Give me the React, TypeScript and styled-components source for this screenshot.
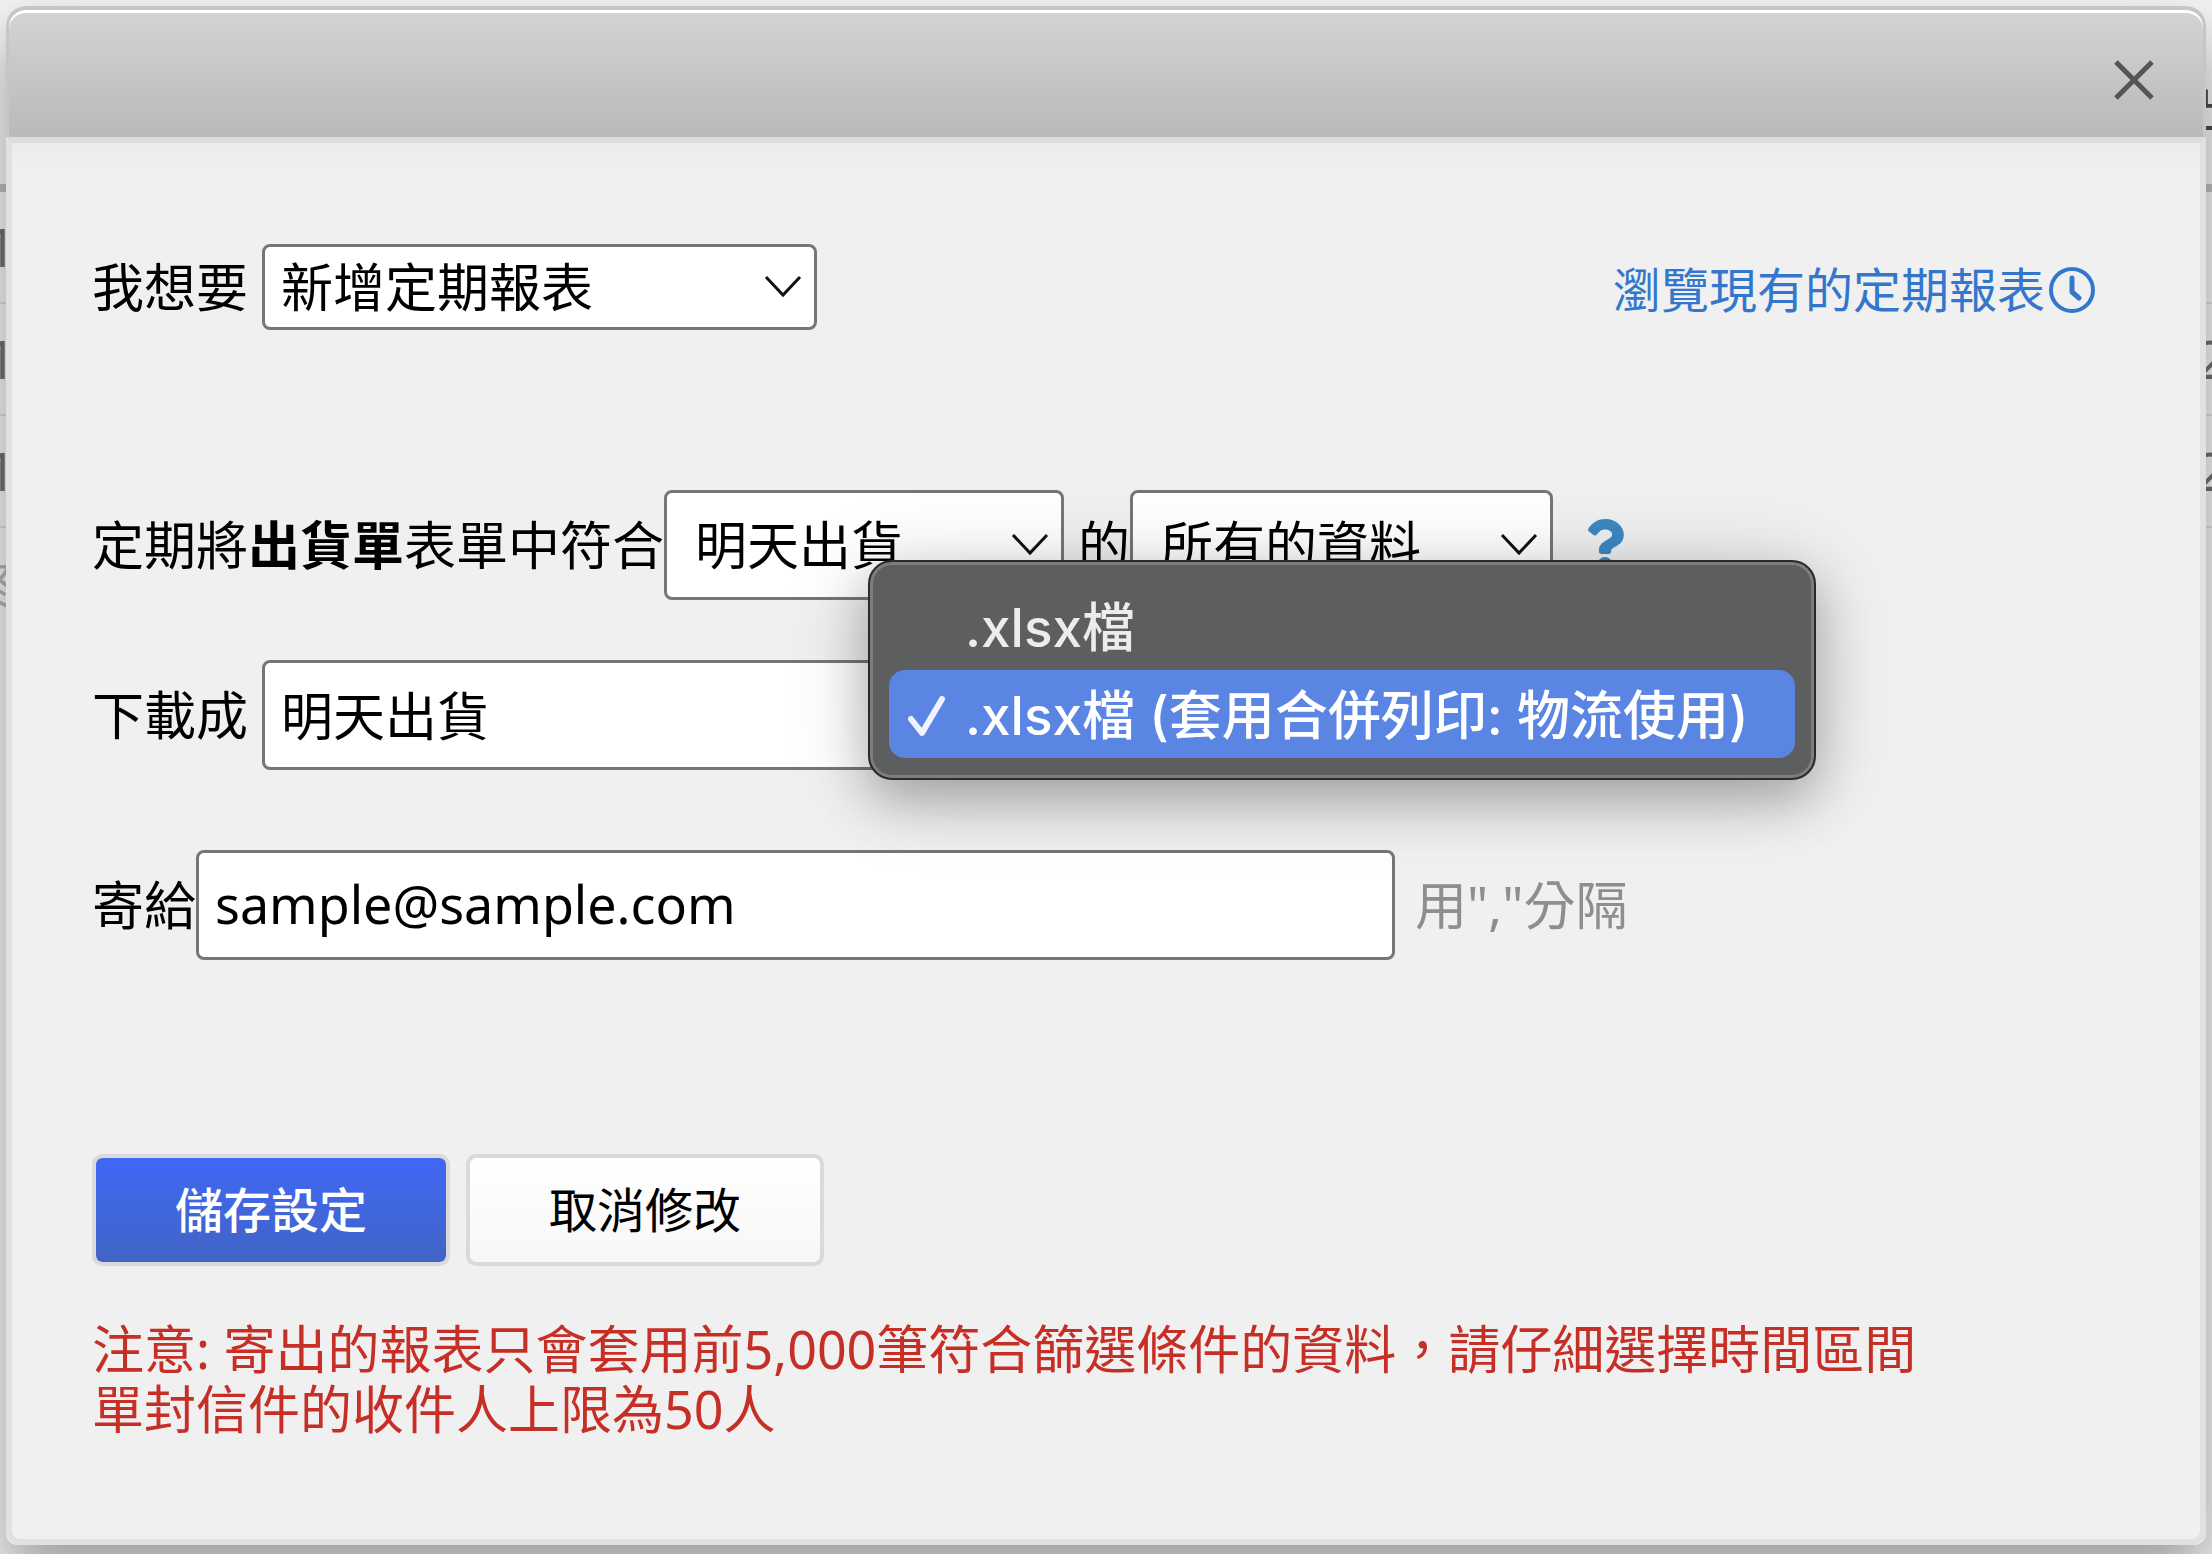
import React, { useState } from "react";
import styled, { createGlobalStyle, css } from "styled-components";
import { FaQuestion } from "react-icons/fa";

const GlobalStyle = createGlobalStyle`
  *, *::before, *::after { box-sizing: border-box; }
  body {
    margin: 0;
    background: #f3f3f3;
    color: #000;
    font-family: "Noto Sans", "Noto Sans CJK TC", sans-serif;
    font-size: 52px;
    line-height: 60px;
  }
  input, select, button { font: inherit; color: inherit; margin: 0; }
`;

const Page = styled.div`
  position: relative;
  min-height: 100vh;
  padding: 6px 6px 8px;
  overflow: hidden;
`;

/* The report list that stays visible round the edges of the dialog. */
const Backdrop = styled.div`
  position: absolute;
  inset: 0;
  overflow: hidden;
  color: #6f6f6f;
`;

const BackRow = styled.div<{ $head?: boolean; $last?: boolean }>`
  display: flex;
  justify-content: space-between;
  align-items: center;
  height: 112px;
  border-bottom: 2px solid #dcdcdc;
  ${(p) =>
    p.$head &&
    css`
      height: 192px;
      border-bottom: 8px solid #bdbdbd;
      padding-top: 34px;
      color: #4a4a4a;
    `}
  ${(p) => p.$last && "border-bottom: 0; color: #b4b4b4;"}
`;

const Edge = styled.span<{ $end?: boolean }>`
  display: flex;
  justify-content: ${(p) => (p.$end ? "flex-end" : "flex-start")};
  width: 16px;
  white-space: nowrap;
`;

const Dialog = styled.section`
  position: relative;
  border-radius: 20px 20px 12px 12px;
  box-shadow: 0 30px 60px rgba(0, 0, 0, 0.36);
`;

const Header = styled.header`
  display: flex;
  align-items: center;
  justify-content: flex-end;
  height: 131px;
  padding: 12px 42px 0;
  border: solid #c6c6c6;
  border-width: 4px 3px 0;
  border-radius: 20px 20px 0 0;
  background: linear-gradient(#d4d4d4, #b9b9b9);
  box-shadow: inset 0 3px 0 #fff;
`;

const CloseButton = styled.button`
  display: flex;
  padding: 6px;
  border: 0;
  background: none;
  color: #555;
`;

const Body = styled.form`
  padding: 101px 104px 100px 80px;
  border: 6px solid #e1e1e1;
  border-top-color: #dcdcdc;
  border-radius: 0 0 14px 14px;
  background: linear-gradient(#ebebeb, #f0f0f0 28px);
`;

const Row = styled.div<{ $space?: number }>`
  display: flex;
  align-items: center;
  white-space: nowrap;
  margin-bottom: ${(p) => p.$space ?? 0}px;
`;

const Label = styled.label<{ $gap?: boolean }>`
  margin-right: ${(p) => (p.$gap ? 14 : 0)}px;
`;

const boxStyle = css`
  border: 3px solid #767676;
  border-radius: 8px;
  background-color: #fff;
`;

const SelectBox = styled.span<{ $width: number }>`
  display: grid;
  align-items: center;
  width: ${(p) => p.$width}px;

  > * { grid-area: 1 / 1; }
  > svg { justify-self: end; margin-right: 15px; pointer-events: none; }
`;

const Select = styled.select<{ $tall?: boolean }>`
  ${boxStyle}
  appearance: none;
  width: 100%;
  height: ${(p) => (p.$tall ? 110 : 86)}px;
  padding: 0 ${(p) => (p.$tall ? 28 : 16)}px;
`;

const TextInput = styled.input<{ $width: number }>`
  ${boxStyle}
  width: ${(p) => p.$width}px;
  height: 110px;
  padding: 0 16px 4px;
`;

const HistoryLink = styled.a`
  display: flex;
  align-items: center;
  gap: 3px;
  margin: 6px 0 0 auto;
  color: #3377cc;
  font-size: 48px;
  text-decoration: none;
`;

const Word = styled.span`
  margin-left: 14px;
`;

const HelpButton = styled.button`
  display: flex;
  margin-left: 26px;
  padding: 0;
  border: 0;
  background: none;
  color: #3b88c4;
`;

const Hint = styled.span`
  margin-left: 20px;
  color: #8e8e8e;
`;

const FormatField = styled.div`
  position: relative;
  margin-left: 10px;
`;

const Menu = styled.ul`
  position: absolute;
  z-index: 2;
  top: -100px;
  left: -44px;
  margin: 0;
  padding: 20px 19px;
  border: 2px solid #2b2b2b;
  border-radius: 24px;
  background: #5d5e5f;
  box-shadow: inset 0 0 0 3px #7c7d7e, 0 20px 50px rgba(0, 0, 0, 0.25), 0 10px 90px rgba(0, 0, 0, 0.15);
  list-style: none;
  font-family: Inter, "Noto Sans CJK TC", sans-serif;
  font-size: 53px;
  font-weight: 500;
`;

const MenuItem = styled.li<{ $on: boolean }>`
  display: flex;
  align-items: center;
  height: 88px;
  padding: 4px 47px 0 18px;
  border-radius: 16px;
  background: ${(p) => (p.$on ? "#5a85e3" : "transparent")};
  color: ${(p) => (p.$on ? "#fff" : "#ececec")};
`;

const Mark = styled.span`
  display: flex;
  width: 58px;
`;

const Button = styled.button<{ $primary?: boolean }>`
  width: 358px;
  height: 112px;
  margin-right: 16px;
  border: 4px solid #dadada;
  border-radius: 10px;
  background: ${(p) =>
    p.$primary ? "linear-gradient(#4067f6, #4065c4)" : "linear-gradient(#ffffff, #f7f7f7)"};
  background-clip: padding-box;
  color: ${(p) => (p.$primary ? "#fff" : "#000")};
  font-size: 48px;
  font-weight: ${(p) => (p.$primary ? 500 : 400)};
`;

const Notice = styled.p`
  margin: 53px 0 0;
  color: #c62f25;
`;

const Chevron = () => (
  <svg width="38" height="24" viewBox="0 0 38 24" fill="none" stroke="#111" strokeWidth="3" aria-hidden="true">
    <path d="M2 2 19 20 36 2" />
  </svg>
);

const Clock = () => (
  <svg width="48" height="48" viewBox="0 0 48 48" fill="none" stroke="currentColor" aria-hidden="true">
    <circle cx="24" cy="24" r="21" strokeWidth="4" />
    <path d="M24 12V26L31 32" strokeWidth="5" strokeLinecap="round" strokeLinejoin="round" />
  </svg>
);

const FORMATS = [".xlsx檔", ".xlsx檔 (套用合併列印: 物流使用)"];

export default function App() {
  const [format, setFormat] = useState(1);

  return (
    <Page>
      <GlobalStyle />
      <Backdrop aria-hidden="true">
        <BackRow $head>
          <Edge />
          <Edge>出</Edge>
        </BackRow>
        <BackRow>
          <Edge $end>1</Edge>
          <Edge />
        </BackRow>
        <BackRow>
          <Edge $end>1</Edge>
          <Edge>2</Edge>
        </BackRow>
        <BackRow>
          <Edge $end>1</Edge>
          <Edge>2</Edge>
        </BackRow>
        <BackRow $last>
          <Edge $end>終</Edge>
          <Edge />
        </BackRow>
      </Backdrop>

      <Dialog role="dialog" aria-label="定期報表">
        <Header>
          <CloseButton type="button" aria-label="關閉">
            <svg width="42" height="42" viewBox="0 0 42 42" fill="none" stroke="currentColor" strokeWidth="5">
              <path d="M3 3 39 39M39 3 3 39" />
            </svg>
          </CloseButton>
        </Header>

        <Body onSubmit={(e) => e.preventDefault()}>
          <Row $space={160}>
            <Label htmlFor="action" $gap>我想要</Label>
            <SelectBox $width={555}>
              <Select id="action">
                <option>新增定期報表</option>
              </Select>
              <Chevron />
            </SelectBox>
            <HistoryLink href="#reports">
              瀏覽現有的定期報表
              <Clock />
            </HistoryLink>
          </Row>

          <Row $space={60}>
            <Label htmlFor="filter">
              定期將<b>出貨單</b>表單中符合
            </Label>
            <SelectBox $width={400}>
              <Select id="filter" $tall>
                <option>明天出貨</option>
              </Select>
              <Chevron />
            </SelectBox>
            <Word>的</Word>
            <SelectBox $width={423}>
              <Select $tall aria-label="資料範圍">
                <option>所有的資料</option>
              </Select>
              <Chevron />
            </SelectBox>
            <HelpButton type="button" aria-label="說明">
              <FaQuestion size={52} />
            </HelpButton>
          </Row>

          <Row $space={80}>
            <Label htmlFor="file" $gap>下載成</Label>
            <TextInput id="file" $width={640} defaultValue="明天出貨" />
            <FormatField>
              <SelectBox $width={800}>
                <Select
                  $tall
                  aria-label="檔案格式"
                  value={format}
                  onChange={(e) => setFormat(Number(e.target.value))}
                >
                  {FORMATS.map((name, i) => (
                    <option key={name} value={i}>{name}</option>
                  ))}
                </Select>
              </SelectBox>
              <Menu role="listbox" aria-label="檔案格式">
                {FORMATS.map((name, i) => (
                  <MenuItem key={name} role="option" aria-selected={i === format} $on={i === format} onClick={() => setFormat(i)}>
                    <Mark>
                      {i === format && (
                        <svg width="40" height="44" viewBox="0 0 40 44" fill="none" stroke="#eef3ff" strokeWidth="6" strokeLinecap="round" strokeLinejoin="round" aria-hidden="true">
                          <path d="M4 25 15 39 35 5" />
                        </svg>
                      )}
                    </Mark>
                    {name}
                  </MenuItem>
                ))}
              </Menu>
            </FormatField>
          </Row>

          <Row $space={194}>
            <Label htmlFor="mail">寄給</Label>
            <TextInput id="mail" $width={1199} defaultValue="sample@sample.com" />
            <Hint>用","分隔</Hint>
          </Row>

          <Row>
            <Button type="submit" $primary>儲存設定</Button>
            <Button type="button">取消修改</Button>
          </Row>

          <Notice>
            注意: 寄出的報表只會套用前5,000筆符合篩選條件的資料，請仔細選擇時間區間
            <br />
            單封信件的收件人上限為50人
          </Notice>
        </Body>
      </Dialog>
    </Page>
  );
}
